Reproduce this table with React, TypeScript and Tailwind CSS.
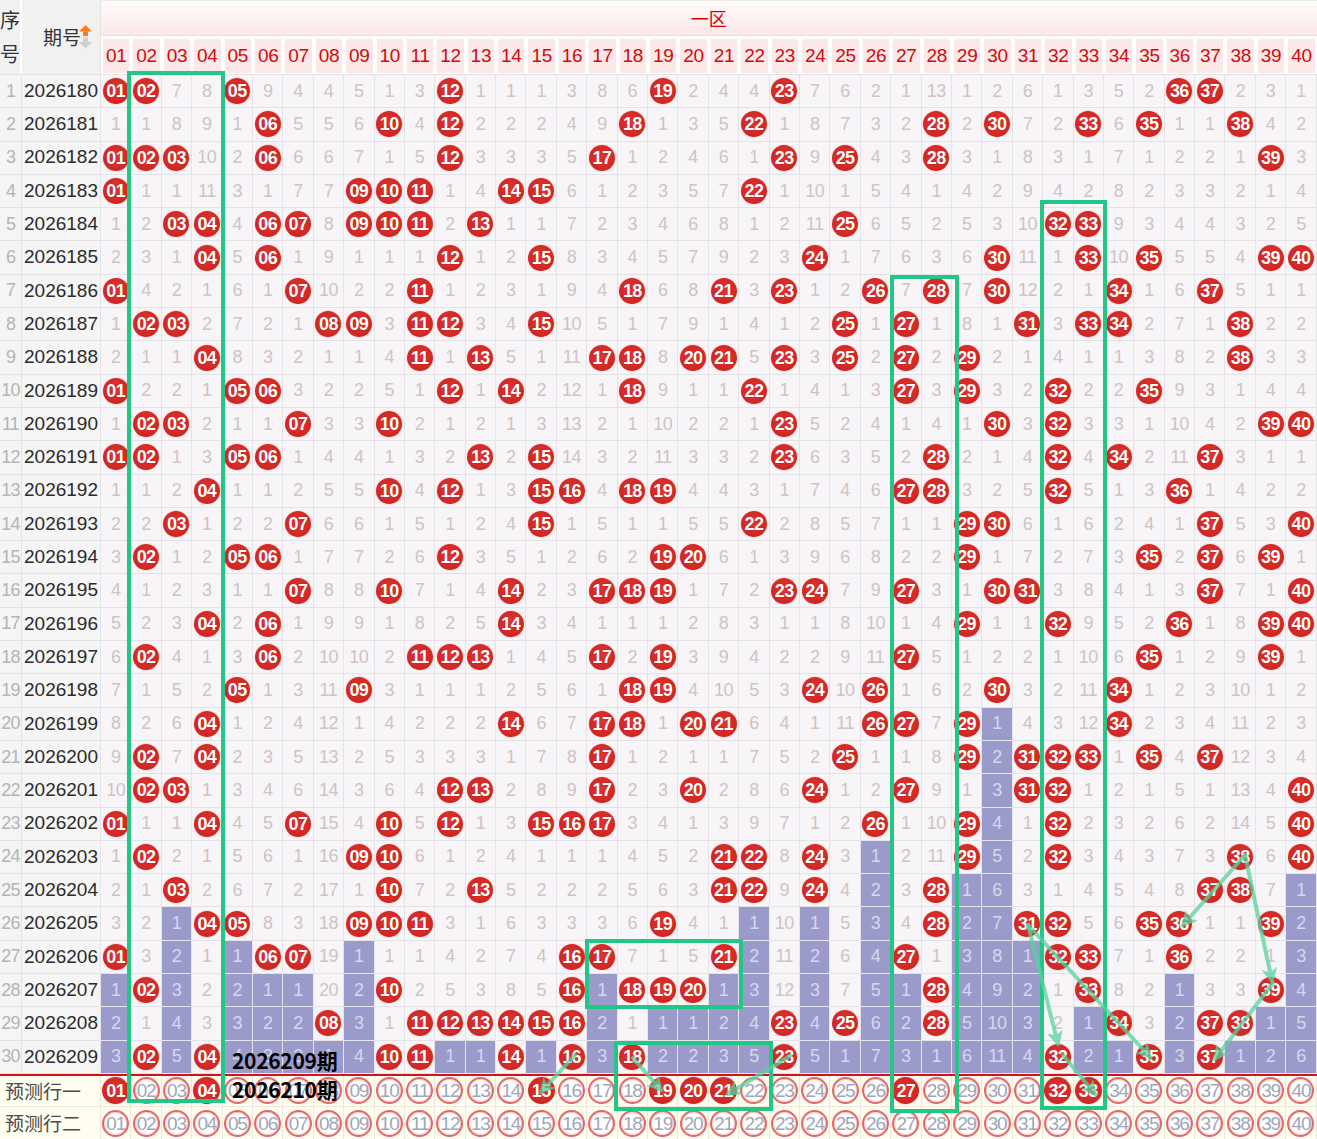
import React from "react";

const HITS: number[][] = [
  [1, 2, 5, 12, 19, 23, 36, 37],
  [6, 10, 12, 18, 22, 28, 30, 33, 35, 38],
  [1, 2, 3, 6, 12, 17, 23, 25, 28, 39],
  [1, 9, 10, 11, 14, 15, 22],
  [3, 4, 6, 7, 9, 10, 11, 13, 25, 32, 33],
  [4, 6, 12, 15, 24, 30, 33, 35, 39, 40],
  [1, 7, 11, 18, 21, 23, 26, 28, 30, 34, 37],
  [2, 3, 8, 9, 11, 12, 15, 25, 27, 31, 33, 34, 38],
  [4, 11, 13, 17, 18, 20, 21, 23, 25, 27, 29, 38],
  [1, 5, 6, 12, 14, 18, 22, 27, 29, 32, 35],
  [2, 3, 7, 10, 23, 30, 32, 39, 40],
  [1, 2, 5, 6, 13, 15, 23, 28, 32, 34, 37],
  [4, 10, 12, 15, 16, 18, 19, 27, 28, 32, 36],
  [3, 7, 15, 22, 29, 30, 37, 40],
  [2, 5, 6, 12, 19, 20, 29, 35, 37, 39],
  [7, 10, 14, 17, 18, 19, 23, 24, 27, 30, 31, 37, 40],
  [4, 6, 14, 29, 32, 36, 39, 40],
  [2, 6, 11, 12, 13, 17, 19, 27, 35, 39],
  [5, 9, 18, 19, 24, 26, 30, 34],
  [4, 14, 17, 18, 20, 21, 26, 27, 29, 34],
  [2, 4, 17, 25, 29, 31, 32, 33, 35, 37],
  [2, 3, 12, 13, 17, 20, 24, 27, 31, 32, 40],
  [1, 4, 7, 10, 12, 15, 16, 17, 26, 29, 32, 40],
  [2, 9, 10, 21, 22, 24, 29, 32, 38, 40],
  [3, 10, 13, 21, 22, 24, 28, 37, 38],
  [4, 5, 9, 10, 11, 19, 28, 31, 32, 35, 36, 39],
  [1, 6, 7, 16, 17, 21, 27, 32, 33, 36],
  [2, 10, 16, 18, 19, 20, 28, 33, 39],
  [8, 11, 12, 13, 14, 15, 16, 23, 25, 28, 34, 37, 38],
  [2, 4, 10, 11, 14, 16, 18, 23, 32, 35, 37],
];

const ROW1 = [0, 0, 7, 8, 0, 9, 4, 4, 5, 1, 3, 0, 1, 1, 1, 3, 8, 6, 0, 2, 4, 4, 0, 7, 6, 2, 1, 13, 1, 2, 6, 1, 3, 5, 2, 0, 0, 2, 3, 1];

const PRED1 = [1, 4, 15, 19, 20, 21, 27, 32, 33];

type Cell = { hit: boolean; val: number; purple: boolean };

function buildGrid(): Cell[][] {
  const grid: Cell[][] = [];
  const lastHit = new Array(40).fill(-1);
  HITS.forEach((h, r) => h.forEach((n) => (lastHit[n - 1] = Math.max(lastHit[n - 1], r))));
  let prev = new Array(40).fill(0);
  HITS.forEach((h, r) => {
    const row: Cell[] = [];
    const cur: number[] = [];
    for (let c = 0; c < 40; c++) {
      const hit = h.includes(c + 1);
      const val = hit ? 0 : r === 0 ? ROW1[c] : prev[c] + 1;
      cur.push(val);
      row.push({ hit, val, purple: !hit && r > lastHit[c] });
    }
    prev = cur;
    grid.push(row);
  });
  return grid;
}

const pad = (n: number) => (n < 10 ? "0" + n : "" + n);
const NUMS = Array.from({ length: 40 }, (_, i) => i + 1);

function Ball({ n, big }: { n: number; big?: boolean }) {
  return (
    <div
      className={`${big ? "w-[27px] h-[27px]" : "w-[26px] h-[26px]"} rounded-full flex items-center justify-center bg-[radial-gradient(circle_at_50%_45%,#e0332f_0%,#d42a26_55%,#c01c1c_100%)] shadow-[0_0_0_1px_rgba(255,220,220,0.8)] text-white font-bold text-[18px] tracking-[-0.6px] leading-none [text-shadow:0_0_1px_#a00]`}
    >
      {pad(n)}
    </div>
  );
}

function RingBall({ n }: { n: number }) {
  return (
    <div className="w-[27px] h-[27px] rounded-full border-2 border-[#e46868] bg-white shadow-[inset_0_0_0_1px_#f6d0d0] flex items-center justify-center text-[#9ea7b6] text-[19px] tracking-[-1.2px] leading-none">
      {pad(n)}
    </div>
  );
}

function SortIcon() {
  return (
    <svg width="13" height="24" viewBox="0 0 13 24">
      <polygon points="6.5,0 0,6.5 13,6.5" fill="#f57c1f" />
      <rect x="4" y="6.5" width="5" height="4.5" fill="#f57c1f" />
      <rect x="4" y="12.5" width="5" height="4.5" fill="#cfcfcf" />
      <polygon points="0,17 13,17 6.5,23.5" fill="#cfcfcf" />
    </svg>
  );
}

const COLS = "grid grid-cols-[22px_79px_repeat(40,30.4px)]";

export default function App() {
  const grid = buildGrid();
  const arrows: [number, number, number, number][] = [
    [575, 1055, 541, 1092],
    [633, 1058, 661, 1090],
    [790, 1056, 728, 1094],
    [1028, 925, 1058, 1044],
    [1028, 925, 1150, 1057],
    [1063, 1055, 1095, 1094],
    [1245, 855, 1183, 925],
    [1245, 855, 1272, 981],
    [1273, 983, 1215, 1059],
  ];
  return (
    <div className="relative w-[1317px] h-[1139px] overflow-hidden bg-white font-['Liberation_Sans','Noto_Sans_CJK_SC',sans-serif]">
      {/* header */}
      <div className={`${COLS} grid-rows-[36px_38px] border-b border-[#e2e2e2]`}>
        <div className="row-span-2 bg-[#f1f1f1] border-r-2 border-white flex flex-col items-center justify-center text-[20px] leading-[34px] text-[#333] font-['Noto_Sans_CJK_SC',sans-serif]">
          <span>序</span>
          <span>号</span>
        </div>
        <div className="row-span-2 bg-[#f1f1f1] border-r border-[#e2e2e2] flex items-center justify-end pr-[8px] text-[19px] text-[#333] font-['Noto_Sans_CJK_SC',sans-serif]">
          <span className="mr-[-2px]">期号</span>
          <SortIcon />
        </div>
        <div className="col-[span_40] bg-gradient-to-b from-[#fffbfb] to-[#fce8e8] border-t border-[#ececec] border-b border-b-[#e2e2e2] flex items-center justify-center text-[#d40000] text-[18px] font-['Noto_Sans_CJK_SC',sans-serif]">
          一区
        </div>
        {NUMS.map((n) => (
          <div key={n} className="bg-white p-[2px] pt-[3px] pb-[1px]">
            <div className="h-full bg-[#fce8e8] flex items-center justify-center text-[#d10a0a] text-[19px] tracking-[-0.3px]">
              {pad(n)}
            </div>
          </div>
        ))}
      </div>

      {/* data rows */}
      {grid.map((row, r) => (
        <div key={r} className={`${COLS} h-[33.3px] bg-[#f7f5f7]`}>
          <div className="flex items-center justify-center border-r border-b border-[#e4e2e4] text-[18px] text-[#b4b4b4] tracking-[-0.8px] bg-[#f5f5f5]">
            {r + 1}
          </div>
          <div className="flex items-center pl-[2px] border-r border-b border-[#e4e2e4] text-[19px] text-[#2b2b2b] bg-[#f5f5f5]">
            {2026180 + r}
          </div>
          {row.map((c, i) =>
            c.hit ? (
              <div key={i} className="flex items-center justify-center border-r border-b border-[#e4e2e4]">
                <Ball n={i + 1} />
              </div>
            ) : (
              <div
                key={i}
                className={`flex items-center justify-center border-r border-b text-[18px] tracking-[-0.5px] ${
                  c.purple ? "bg-[#9b9bcb] border-[#e6e6f0] text-[#d7d7ee]" : "border-[#e4e2e4] text-[#cfc3c3]"
                }`}
              >
                {c.val}
              </div>
            )
          )}
        </div>
      ))}

      {/* predict rows */}
      <div className={`${COLS} h-[33px] bg-[#fffdf0] border-t-2 border-[#cf1515]`}>
        <div className="col-span-2 flex items-center pl-[5px] border-r border-b border-[#ebe9dc] text-[19px] text-[#4a4a4a] font-['Noto_Sans_CJK_SC',sans-serif]">
          预测行一
        </div>
        {NUMS.map((n) => (
          <div key={n} className="flex items-center justify-center border-r border-b border-[#ebe9dc]">
            {PRED1.includes(n) ? <Ball n={n} big /> : <RingBall n={n} />}
          </div>
        ))}
      </div>
      <div className={`${COLS} h-[33px] bg-[#fffdf0]`}>
        <div className="col-span-2 flex items-center pl-[5px] border-r border-[#ebe9dc] text-[19px] text-[#4a4a4a] font-['Noto_Sans_CJK_SC',sans-serif]">
          预测行二
        </div>
        {NUMS.map((n) => (
          <div key={n} className="flex items-center justify-center border-r border-[#ebe9dc]">
            <RingBall n={n} />
          </div>
        ))}
      </div>

      {/* annotation overlay */}
      <svg className="absolute left-0 top-0 pointer-events-none" width="1317" height="1139" viewBox="0 0 1317 1139">
        <defs>
          <marker id="ah" viewBox="0 0 10 10" refX="8" refY="5" markerWidth="4" markerHeight="4" orient="auto-start-reverse">
            <path d="M0,0 L10,5 L0,10 L2.5,5 Z" fill="#56d39f" />
          </marker>
        </defs>
        <g fill="none" stroke="#22c785" strokeWidth="4">
          <rect x="129" y="73" width="94" height="1028" />
          <rect x="892" y="277" width="65" height="834" />
          <rect x="1042" y="202" width="63" height="906" />
          <rect x="587" y="941" width="154" height="66" />
          <rect x="616" y="1043" width="155" height="66" />
        </g>
        {arrows.map(([x1, y1, x2, y2], i) => (
          <g key={i} opacity="0.75">
            <line x1={x1} y1={y1} x2={x2} y2={y2} stroke="#56d39f" strokeWidth="4" strokeLinecap="round" markerEnd="url(#ah)" />
          </g>
        ))}
      </svg>
      <div className="absolute left-[232px] top-[1046px] text-[21px] leading-[29px] font-bold text-black tracking-[-0.3px] font-['Noto_Sans_CJK_SC',sans-serif] pointer-events-none">
        <div>2026209期</div>
        <div>2026210期</div>
      </div>
    </div>
  );
}
